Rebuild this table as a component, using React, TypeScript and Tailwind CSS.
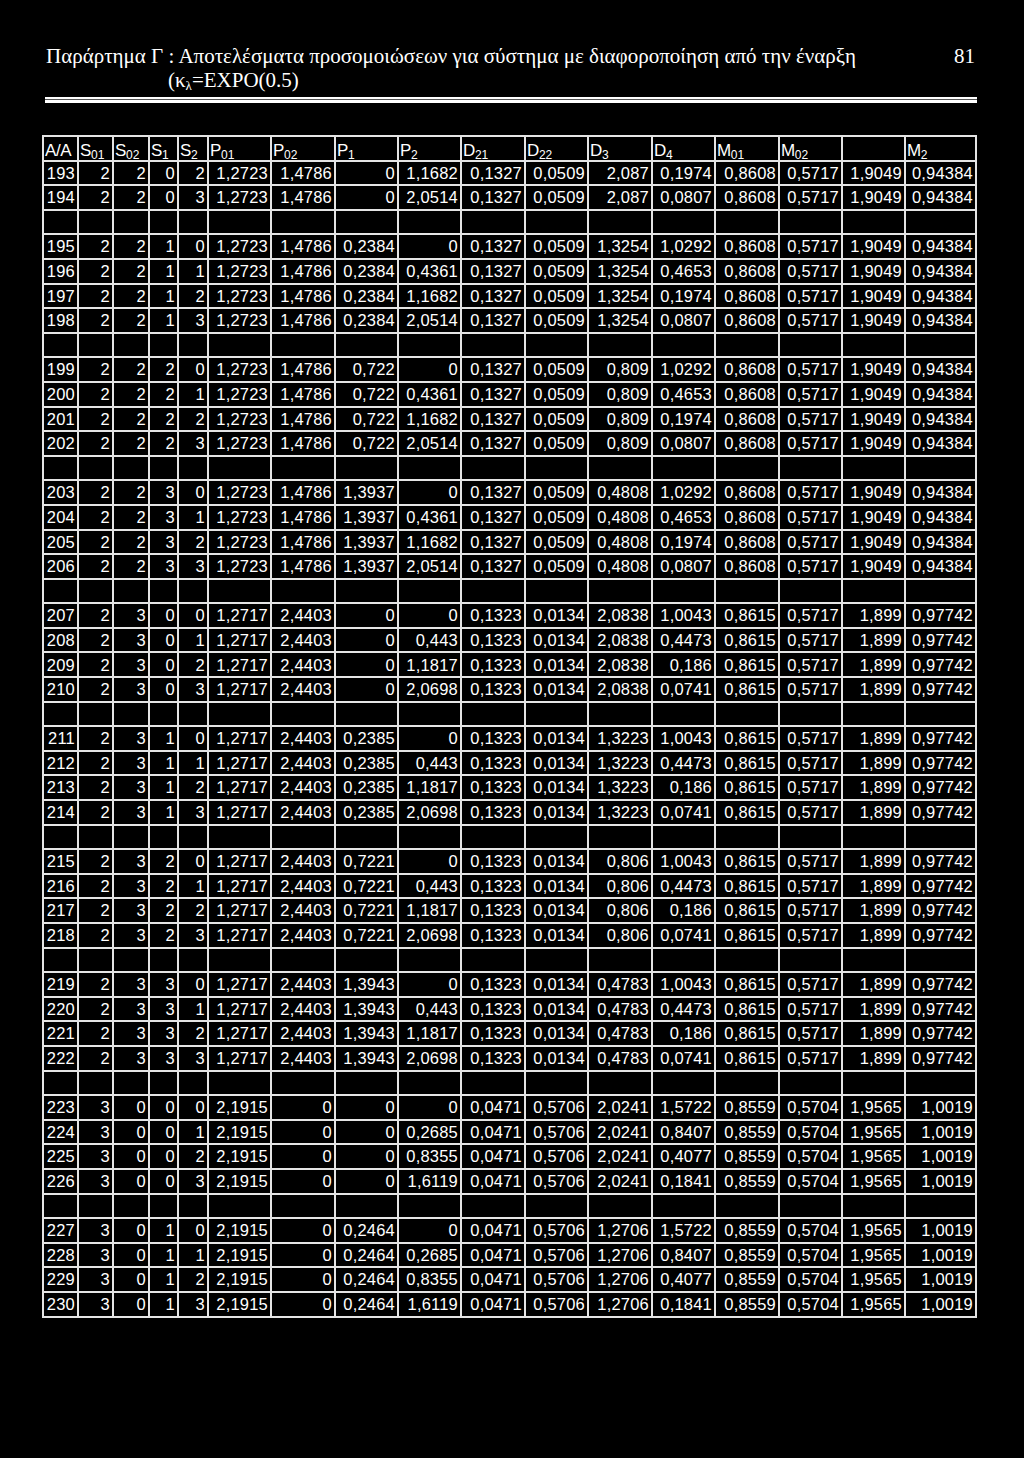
type Block = {
  s01: number;
  s02: number;
  p01: string;
  p02: string;
  d21: string;
  d22: string;
  m01: string;
  m02: string;
  x: string;
  m2: string;
  p1: string[];
  d3: string[];
  p2: string[];
  d4: string[];
};

const A: Block = {
  s01: 2,
  s02: 2,
  p01: '1,2723',
  p02: '1,4786',
  d21: '0,1327',
  d22: '0,0509',
  m01: '0,8608',
  m02: '0,5717',
  x: '1,9049',
  m2: '0,94384',
  p1: ['0', '0,2384', '0,722', '1,3937'],
  d3: ['2,087', '1,3254', '0,809', '0,4808'],
  p2: ['0', '0,4361', '1,1682', '2,0514'],
  d4: ['1,0292', '0,4653', '0,1974', '0,0807'],
};

const B: Block = {
  s01: 2,
  s02: 3,
  p01: '1,2717',
  p02: '2,4403',
  d21: '0,1323',
  d22: '0,0134',
  m01: '0,8615',
  m02: '0,5717',
  x: '1,899',
  m2: '0,97742',
  p1: ['0', '0,2385', '0,7221', '1,3943'],
  d3: ['2,0838', '1,3223', '0,806', '0,4783'],
  p2: ['0', '0,443', '1,1817', '2,0698'],
  d4: ['1,0043', '0,4473', '0,186', '0,0741'],
};

const C: Block = {
  s01: 3,
  s02: 0,
  p01: '2,1915',
  p02: '0',
  d21: '0,0471',
  d22: '0,5706',
  m01: '0,8559',
  m02: '0,5704',
  x: '1,9565',
  m2: '1,0019',
  p1: ['0', '0,2464'],
  d3: ['2,0241', '1,2706'],
  p2: ['0', '0,2685', '0,8355', '1,6119'],
  d4: ['1,5722', '0,8407', '0,4077', '0,1841'],
};

// groups of rows: [block, S1, first S2]
const GROUPS: [Block, number, number][] = [
  [A, 0, 2],
  [A, 1, 0],
  [A, 2, 0],
  [A, 3, 0],
  [B, 0, 0],
  [B, 1, 0],
  [B, 2, 0],
  [B, 3, 0],
  [C, 0, 0],
  [C, 1, 0],
];

type Row = string[] | null;

function buildRows(): Row[] {
  const rows: Row[] = [];
  let n = 193;
  GROUPS.forEach(([b, s1, from], gi) => {
    if (gi > 0) rows.push(null);
    for (let s2 = from; s2 < 4; s2++) {
      rows.push([
        String(n++),
        String(b.s01),
        String(b.s02),
        String(s1),
        String(s2),
        b.p01,
        b.p02,
        b.p1[s1],
        b.p2[s2],
        b.d21,
        b.d22,
        b.d3[s1],
        b.d4[s2],
        b.m01,
        b.m02,
        b.x,
        b.m2,
      ]);
    }
  });
  return rows;
}

const WIDTHS = [35, 35, 36, 29, 30, 63, 64, 63, 63, 64, 63, 64, 63, 64, 63, 63, 71];

const HEADERS: [string, string][] = [
  ['A/A', ''],
  ['S', '01'],
  ['S', '02'],
  ['S', '1'],
  ['S', '2'],
  ['P', '01'],
  ['P', '02'],
  ['P', '1'],
  ['P', '2'],
  ['D', '21'],
  ['D', '22'],
  ['D', '3'],
  ['D', '4'],
  ['M', '01'],
  ['M', '02'],
  ['', ''],
  ['M', '2'],
];

const cell = 'border-2 border-[#e4e4e4] h-[24.6px] p-0';

export default function App() {
  const rows = buildRows();
  return (
    <div className="w-[1024px] h-[1458px] bg-black text-white overflow-hidden">
      <div className="pl-[46px] pr-[49px] pt-[44px] font-['Liberation_Serif',serif] text-[21px] leading-[25px]">
        <div className="flex justify-between">
          <span>Παράρτημα Γ : Αποτελέσματα προσομοιώσεων για σύστημα με διαφοροποίηση από την έναρξη</span>
          <span>81</span>
        </div>
        <div className="pl-[122px] -mt-[1px]">
          (κ<sub className="text-[13px]">λ</sub>=EXPO(0.5)
        </div>
      </div>

      <div className="ml-[45px] w-[932px] mt-[4px]">
        <div className="h-[2px] bg-white" />
        <div className="h-[1px] bg-[#555]" />
        <div className="h-[3px] bg-white" />
      </div>

      <table className="ml-[42px] mt-[32px] table-fixed border-collapse w-[935px] font-['Liberation_Sans',Arial,sans-serif] text-[16.5px] leading-none">
        <colgroup>
          {WIDTHS.map((w, i) => (
            <col key={i} style={{ width: w }} />
          ))}
        </colgroup>
        <thead>
          <tr>
            {HEADERS.map(([main, sub], i) => (
              <th
                key={i}
                className={`${cell} text-left align-bottom font-normal text-[17px] pl-[1px] pb-[1px] tracking-[-0.4px] whitespace-nowrap`}
              >
                {main}
                {sub && <sub className="text-[12px] tracking-normal">{sub}</sub>}
              </th>
            ))}
          </tr>
        </thead>
        <tbody>
          {rows.map((r, ri) => (
            <tr key={ri}>
              {WIDTHS.map((_, ci) => (
                <td key={ci} className={`${cell} text-right align-middle pr-[2px] tracking-[0.2px]`}>
                  {r ? r[ci] : ''}
                </td>
              ))}
            </tr>
          ))}
        </tbody>
      </table>
    </div>
  );
}
